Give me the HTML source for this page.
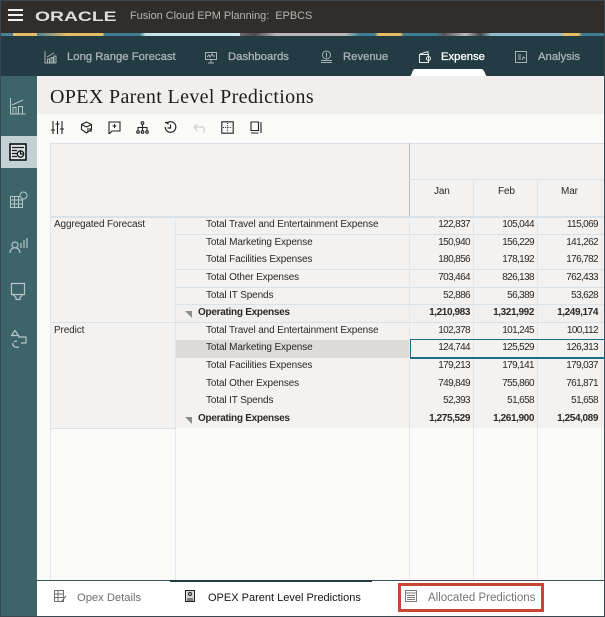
<!DOCTYPE html>
<html><head><meta charset="utf-8">
<style>
html,body{margin:0;padding:0}
body{width:605px;height:617px;position:relative;overflow:hidden;background:#3a4650;font-family:"Liberation Sans",sans-serif;font-size:10px;letter-spacing:-.13px;color:#2b2926}
.a{position:absolute}
.t{position:absolute;white-space:nowrap;line-height:14px;margin-top:1px}
.n{position:absolute;white-space:nowrap;line-height:14px;text-align:right;width:60px;letter-spacing:-.62px;margin-top:1px}
.b{font-weight:bold;letter-spacing:-.28px}
.n.b{letter-spacing:-.4px}
.nav{position:absolute;top:50px;line-height:15px;font-size:11.3px;letter-spacing:0;font-weight:normal;-webkit-text-stroke:.3px currentColor;color:#a9b3b5;white-space:nowrap}
.h{position:absolute;background:#dae2e9;height:1px}
.v{position:absolute;background:#e1e7ec;width:1px}
svg{position:absolute;fill:none}
</style></head><body>
<div class="a" style="left:1px;top:1px;width:603px;height:32px;background:#312d2a"></div>
<div class="a" style="left:1px;top:33px;width:603px;height:3px;background:linear-gradient(90deg,#4d7f95 0,#4d7f95 2%,#e5bd66 2%,#e5bd66 6%,#4d7f95 6%,#e5bd66 11%,#e5bd66 17%,#3f7c93 17%,#3f7c93 23%,#c9e5ec 24%,#c9e5ec 36%,#d4e9ee 48%,#8fb9c9 58%,#454442 60%,#555 67%,#b5b5b3 69%,#b9b8b6 105%)"></div>
<div class="a" style="left:240px;top:33px;width:364px;height:3px;background:linear-gradient(90deg,#6f6d6b 0,#4d4b49 4%,#b8b7b5 10%,#b8b7b5 29%,#3d7c93 33%,#3d7c93 37%,#e5bd66 38%,#e5bd66 44%,#3d7c93 45%,#3d7c93 54%,#555 56%,#bbb 62%,#444 66%,#8fbccc 69%,#8fbccc 88%,#e5bd66 89%,#e5bd66 93%,#3d7c93 94%,#3d7c93 100%)"></div>
<div class="a" style="left:1px;top:36px;width:603px;height:40px;background:#233c43"></div>
<div class="a" style="left:37px;top:76px;width:567px;height:504px;background:#fafaf8"></div>
<div class="a" style="left:1px;top:76px;width:36px;height:540px;background:#3d6468"></div>
<div class="a" style="left:1px;top:136px;width:36px;height:32px;background:#c3d0d4"></div>
<div class="a" style="left:37px;top:76px;width:567px;height:38px;background:#f0efee"></div>

<!-- hamburger -->
<div class="a" style="left:8px;top:9px;width:15px;height:2px;background:#f4f1ec"></div>
<div class="a" style="left:8px;top:14px;width:15px;height:2px;background:#f4f1ec"></div>
<div class="a" style="left:8px;top:19px;width:15px;height:2px;background:#f4f1ec"></div>
<!-- oracle -->
<div class="t" style="left:35px;top:7px;font-size:14px;line-height:16px;letter-spacing:0;color:#dfddda;font-weight:bold;transform:scaleX(1.38);transform-origin:0 0">ORACLE</div>
<div class="t" style="left:130px;top:8px;font-size:10.900px;letter-spacing:0;color:#b9b4ad;font-weight:normal">Fusion Cloud EPM Planning:&nbsp; EPBCS</div>

<!-- nav -->
<svg style="left:44px;top:50px" width="13" height="14" stroke="#a9b3b5"><path d="M1 1v12h11M3 7l7-4M3.500 13V9h2v4M7 13V7.500h2V13M10 13V6h2v7"/></svg>
<div class="nav" style="left:67px">Long Range Forecast</div>
<svg style="left:204px;top:51px" width="14" height="13" stroke="#a9b3b5"><path d="M1.500 1.500h11v7h-11zM3 6l2-2 1 2 2-3 1 2h2M7 8.500v3M4 12h6"/></svg>
<div class="nav" style="left:228px">Dashboards</div>
<svg style="left:320px;top:50px" width="13" height="14" stroke="#a9b3b5"><circle cx="6.500" cy="5" r="4"/><path d="M6.500 2.500v5M1 10.500h11M1 12.500h11"/></svg>
<div class="nav" style="left:343px">Revenue</div>
<svg style="left:418px;top:50px" width="14" height="14" stroke="#e6eaeb"><path d="M1.500 4.500h9v8h-9zM2 4l8-2.500V4"/><circle cx="10.500" cy="8.500" r="2"/></svg>
<div class="nav" style="left:441px;color:#fff">Expense</div>
<svg style="left:515px;top:51px" width="13" height="13" stroke="#a9b3b5"><path d="M.500.500h11v11h-11zM3 4h3M3 6h3M3 8h3M7 9l1.500-3 1.500 1.500"/></svg>
<div class="nav" style="left:538px">Analysis</div>
<svg style="left:410px;top:69px" width="77" height="7"><path d="M0 7 C2 7 2 0 5 0H71C75 0 75 7 77 7Z" fill="#fff"/></svg>

<!-- sidebar icons -->
<svg style="left:9px;top:97px" width="18" height="18" stroke="#b4c6c8"><path d="M1.500 1v16h15M3 8l11-5M4 16.500v-6h3v6M9.500 16.500v-7h4v7"/></svg>
<svg style="left:9px;top:143px" width="18" height="18" stroke="#1c1c1c" stroke-width="1.300"><rect x="1" y="1" width="16" height="16" fill="#dfe5e7" stroke="#111" stroke-width="1.600"/><path d="M3 4.500h12M3 7.500h5M3 10.500h5M3 13.500h5"/><circle cx="11.500" cy="11" r="3.200"/><path d="M11.500 8v3h3"/></svg>
<svg style="left:9px;top:191px" width="19" height="18" stroke="#b4c6c8"><path d="M1.500 5.500h12v11h-12zM1.500 9h12M1.500 13h12M5.500 5.500v11M9.500 5.500v11"/><circle cx="14.500" cy="4.500" r="3.500" fill="#3d6468"/></svg>
<svg style="left:9px;top:236px" width="19" height="18" stroke="#b4c6c8" stroke-width="1.200"><circle cx="6" cy="9" r="3"/><path d="M1 17c0-7 10-7 10 0M12 7v5M15 4v8M18 2v10"/></svg>
<svg style="left:10px;top:282px" width="17" height="19" stroke="#b4c6c8" stroke-width="1.200"><path d="M1.500 1.500h13v11h-13zM3 12.500l3 3v2h4v-2l3-3"/></svg>
<svg style="left:11px;top:329px" width="16" height="19" stroke="#b4c6c8" stroke-width="1.200"><path d="M4 1.500l3.500 5h-7zM7 8h8v6h-5M6 12l-3 .5M8 18c-4 1-7-1-6-4"/></svg>

<div class="t" style="left:50px;top:85px;font-family:'Liberation Serif',serif;font-size:20px;line-height:22px;color:#1f1c1a;letter-spacing:.35px">OPEX Parent Level Predictions</div>

<!-- toolbar -->
<svg style="left:51px;top:121px" width="13" height="13" stroke="#222" stroke-width="1.100"><path d="M2 0v13M6.500 0v13M11 0v13M0 9h4M4.500 3h4M9 8h4"/></svg>
<svg style="left:80px;top:121px" width="13" height="13" stroke="#222" stroke-width="1.100"><path d="M6.500 1l5 2.500v5l-5 3.500-5-3.500v-5zM1.500 3.500l5 2.500 5-2.500M7 8h5M7 10h5"/></svg>
<svg style="left:108px;top:121px" width="13" height="13" stroke="#222" stroke-width="1.100"><path d="M1 1h11v9H4l-3 3zM6.500 3v4M4.500 5h4"/></svg>
<svg style="left:136px;top:121px" width="13" height="13" stroke="#222" stroke-width="1.100"><circle cx="6.500" cy="2" r="1.300"/><circle cx="2" cy="11" r="1.300"/><circle cx="6.500" cy="11" r="1.300"/><circle cx="11" cy="11" r="1.300"/><path d="M6.500 3.500v6M2 9V6.500h9V9"/></svg>
<svg style="left:164px;top:121px" width="13" height="13" stroke="#222" stroke-width="1.200"><path d="M2.500 2.500A5.300 5.300 0 1 1 1.200 6M1 1.500h3v2M6.500 3.500v3.500h-3"/></svg>
<svg style="left:193px;top:122px" width="13" height="12" stroke="#cfd0cf" stroke-width="1.200"><path d="M1 5l3.500-3M1 5l3.500 4M1 5h8c3 0 3 4 1 6"/></svg>
<svg style="left:221px;top:121px" width="13" height="13" stroke="#222" stroke-width="1.100"><path d="M.8.800h11.400v11.400H.8z"/><path d="M6.500 2v9M2 6.500h9" stroke-dasharray="1 1.200"/></svg>
<svg style="left:250px;top:121px" width="13" height="13" stroke="#222" stroke-width="1.100"><path d="M1 1h7.500v8.500H1zM1 12h7.500M11 1v11"/></svg>

<!-- grid backgrounds -->
<div class="a" style="left:51px;top:144px;width:358px;height:72px;background:#f3f2f0"></div>
<div class="a" style="left:410px;top:144px;width:194px;height:72px;background:#f3f2f0"></div>
<div class="a" style="left:51px;top:216px;width:124px;height:212px;background:#f3f2f0"></div>
<div class="a" style="left:176px;top:216px;width:428px;height:212px;background:#f3f2f0"></div>
<div class="a" style="left:176px;top:340px;width:233px;height:18px;background:#dcdbd9"></div>
<div class="a" style="left:176px;top:304px;width:428px;height:18px;background:#f1f0ee"></div>

<!-- grid lines -->
<div class="h" style="left:50px;top:143px;width:554px"></div>
<div class="v" style="left:50px;top:143px;height:437px"></div>
<div class="v" style="left:175px;top:216px;height:364px"></div>
<div class="v" style="left:409px;top:143px;height:73px;background:#b5bbbe"></div>
<div class="v" style="left:409px;top:216px;height:364px"></div>
<div class="v" style="left:473px;top:179px;height:401px"></div>
<div class="v" style="left:537px;top:179px;height:401px"></div>
<div class="v" style="left:601px;top:179px;height:401px"></div>
<div class="h" style="left:409px;top:179px;width:195px"></div>
<div class="h" style="left:50px;top:216px;width:554px;height:2px"></div>
<div class="h" style="left:175px;top:234px;width:429px"></div>
<div class="h" style="left:175px;top:269px;width:429px"></div>
<div class="h" style="left:175px;top:287px;width:429px"></div>
<div class="h" style="left:175px;top:304px;width:429px"></div>
<div class="h" style="left:50px;top:322px;width:554px"></div>
<div class="h" style="left:50px;top:428px;width:126px"></div>

<div class="t" style="left:54px;top:217px">Aggregated Forecast</div>
<div class="t" style="left:54px;top:323px">Predict</div>

<div class="t" style="left:434px;top:184px">Jan</div>
<div class="t" style="left:498px;top:184px">Feb</div>
<div class="t" style="left:561px;top:184px">Mar</div>

<!-- rows -->
<div class="t" style="left:206px;top:217px">Total Travel and Entertainment Expense</div>
<div class="n" style="left:410px;top:217px">122,837</div><div class="n" style="left:474px;top:217px">105,044</div><div class="n" style="left:538px;top:217px">115,069</div>
<div class="t" style="left:206px;top:235px">Total Marketing Expense</div>
<div class="n" style="left:410px;top:235px">150,940</div><div class="n" style="left:474px;top:235px">156,229</div><div class="n" style="left:538px;top:235px">141,262</div>
<div class="t" style="left:206px;top:252px">Total Facilities Expenses</div>
<div class="n" style="left:410px;top:252px">180,856</div><div class="n" style="left:474px;top:252px">178,192</div><div class="n" style="left:538px;top:252px">176,782</div>
<div class="t" style="left:206px;top:270px">Total Other Expenses</div>
<div class="n" style="left:410px;top:270px">703,464</div><div class="n" style="left:474px;top:270px">826,138</div><div class="n" style="left:538px;top:270px">762,433</div>
<div class="t" style="left:206px;top:288px">Total IT Spends</div>
<div class="n" style="left:410px;top:288px">52,886</div><div class="n" style="left:474px;top:288px">56,389</div><div class="n" style="left:538px;top:288px">53,628</div>
<svg style="left:185px;top:311px" width="7" height="7"><path d="M0 0h7v7z" fill="#8d8d8b"/></svg>
<div class="t b" style="left:198px;top:305px">Operating Expenses</div>
<div class="n b" style="left:410px;top:305px">1,210,983</div><div class="n b" style="left:474px;top:305px">1,321,992</div><div class="n b" style="left:538px;top:305px">1,249,174</div>

<div class="t" style="left:206px;top:323px">Total Travel and Entertainment Expense</div>
<div class="n" style="left:410px;top:323px">102,378</div><div class="n" style="left:474px;top:323px">101,245</div><div class="n" style="left:538px;top:323px">100,112</div>
<div class="t" style="left:206px;top:340px">Total Marketing Expense</div>
<div class="n" style="left:410px;top:340px">124,744</div><div class="n" style="left:474px;top:340px">125,529</div><div class="n" style="left:538px;top:340px">126,313</div>
<div class="t" style="left:206px;top:358px">Total Facilities Expenses</div>
<div class="n" style="left:410px;top:358px">179,213</div><div class="n" style="left:474px;top:358px">179,141</div><div class="n" style="left:538px;top:358px">179,037</div>
<div class="t" style="left:206px;top:376px">Total Other Expenses</div>
<div class="n" style="left:410px;top:376px">749,849</div><div class="n" style="left:474px;top:376px">755,860</div><div class="n" style="left:538px;top:376px">761,871</div>
<div class="t" style="left:206px;top:393px">Total IT Spends</div>
<div class="n" style="left:410px;top:393px">52,393</div><div class="n" style="left:474px;top:393px">51,658</div><div class="n" style="left:538px;top:393px">51,658</div>
<svg style="left:185px;top:417px" width="7" height="7"><path d="M0 0h7v7z" fill="#8d8d8b"/></svg>
<div class="t b" style="left:198px;top:411px">Operating Expenses</div>
<div class="n b" style="left:410px;top:411px">1,275,529</div><div class="n b" style="left:474px;top:411px">1,261,900</div><div class="n b" style="left:538px;top:411px">1,254,089</div>

<!-- selection -->
<div class="a" style="left:410px;top:339px;width:195px;height:17px;border:1px solid #1f6f8b;border-width:1px 0 2px 1px;box-sizing:content-box"></div>

<!-- bottom tabs -->
<div class="a" style="left:37px;top:580px;width:567px;height:36px;background:#fff"></div>
<div class="a" style="left:37px;top:580px;width:567px;height:1px;background:#3d5056"></div>
<div class="a" style="left:170px;top:580px;width:202px;height:2px;background:#233c43"></div>
<svg style="left:54px;top:590px" width="13" height="13" stroke="#6f6f6d"><path d="M.500.500h9v11h-9zM.500 4h9M.500 7.500h9M4 .500v11M7 12l5-6"/></svg>
<div class="t" style="left:77px;top:590px;font-size:11.200px;letter-spacing:0;color:#6f6d6b">Opex Details</div>
<svg style="left:185px;top:590px" width="11" height="13" stroke="#222"><path d="M.500.500h9v11h-9z" fill="#d8d8d8"/><path d="M2 9h6M2 11h6"/><circle cx="5" cy="4" r="1.500"/></svg>
<div class="t" style="left:208px;top:590px;font-size:11px;letter-spacing:0;color:#161513">OPEX Parent Level Predictions</div>
<svg style="left:405px;top:590px" width="13" height="13" stroke="#7a7a78"><path d="M.500.500h11v11h-11z"/><path d="M.500 3h11M2 5.500h8M2 7.500h8M2 9.500h8"/></svg>
<div class="t" style="left:428px;top:590px;font-size:11.500px;letter-spacing:0;color:#777573">Allocated Predictions</div>
<div class="a" style="left:398px;top:583px;width:140px;height:23px;border:3px solid #c74634"></div>
</body></html>
